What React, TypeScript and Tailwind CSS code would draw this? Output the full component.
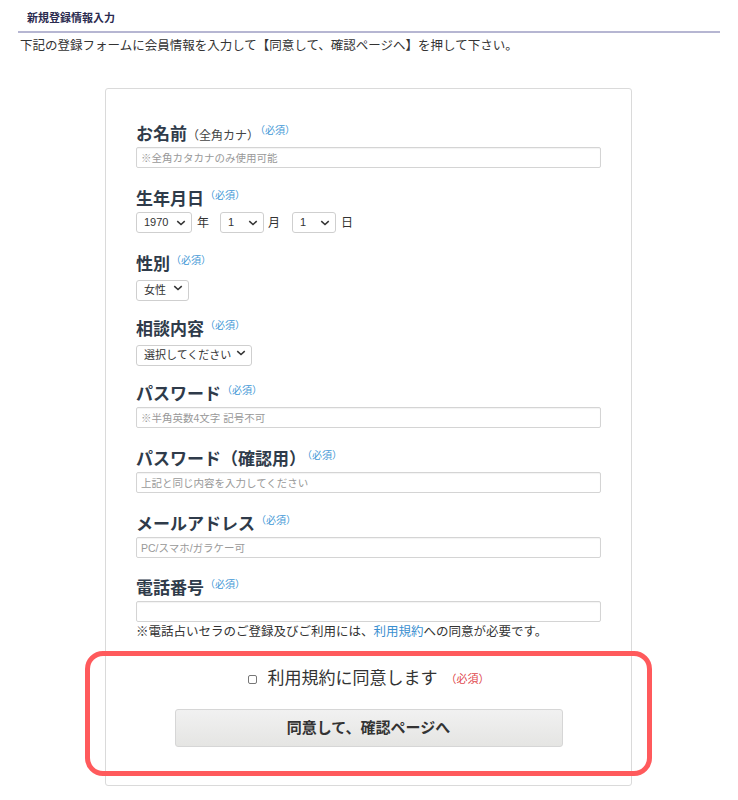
import React from "react";

const font = { fontFamily: '"Liberation Sans", "Noto Sans CJK JP", sans-serif' };

function Required({ red = false }: { red?: boolean }) {
  return (
    <span
      className={`ml-[1px] align-[6px] text-[10px] font-normal ${
        red ? "text-[#e0474c]" : "text-[#3f98d6]"
      }`}
    >
      （必須）
    </span>
  );
}

function Label({ children, sub }: { children: React.ReactNode; sub?: string }) {
  return (
    <div className="mb-[4px] h-[24px] whitespace-nowrap text-[17px] font-bold leading-[24px] text-[#2f3b4a]">
      {children}
      {sub && <span className="text-[12px] font-normal text-[#444]">{sub}</span>}
      <Required />
    </div>
  );
}

function TextInput({ placeholder }: { placeholder?: string }) {
  return (
    <input
      type="text"
      placeholder={placeholder}
      className="block h-[21px] w-full rounded-[2px] border border-[#d4d4d4] bg-white px-[4px] text-[10.5px] text-[#333] shadow-[inset_0_1px_1px_rgba(0,0,0,0.05)] outline-none placeholder:text-[#999]"
    />
  );
}

function Chevron() {
  return (
    <svg
      viewBox="0 0 12 8"
      className="pointer-events-none absolute right-[6px] top-1/2 h-[6px] w-[10px] -translate-y-1/2"
      fill="none"
      stroke="#333"
      strokeWidth="2"
    >
      <path d="M1 1.5 L6 6 L11 1.5" />
    </svg>
  );
}

function Select({ value, width }: { value: string; width: string }) {
  return (
    <div className={`relative h-[21px] ${width}`}>
      <select
        defaultValue={value}
        className="h-full w-full appearance-none rounded-[3px] border border-[#cfcfcf] bg-white pl-[7px] text-[11px] text-[#333] outline-none"
      >
        <option>{value}</option>
      </select>
      <Chevron />
    </div>
  );
}

export default function App() {
  return (
    <div className="relative h-[800px] w-[738px] overflow-hidden bg-white" style={font}>
      {/* Header */}
      <div className="px-[18px] pt-[11px]">
        <h1 className="border-b-2 border-[#b6b6d2] pb-[5px] pl-[9px] text-[11px] font-bold leading-[15px] text-[#2b2b4f]">
          新規登録情報入力
        </h1>
        <p className="mt-[4px] pl-[2px] text-[12.5px] leading-[18px] text-[#333]">
          下記の登録フォームに会員情報を入力して【同意して、確認ページへ】を押して下さい。
        </p>
      </div>

      {/* Form card */}
      <div className="ml-[105px] mt-[33px] w-[527px] rounded-[3px] border border-[#dadada] px-[30px] pb-[38px] pt-[30px]">
        <div className="mb-[16px]">
          <Label sub="（全角カナ）">お名前</Label>
          <TextInput placeholder="※全角カタカナのみ使用可能" />
        </div>

        <div className="mb-[16px]">
          <Label>生年月日</Label>
          <div className="flex items-center text-[12px] text-[#333]">
            <Select value="1970" width="w-[56px]" />
            <span className="ml-[5px] mr-[11px]">年</span>
            <Select value="1" width="w-[44px]" />
            <span className="ml-[4px] mr-[12px]">月</span>
            <Select value="1" width="w-[44px]" />
            <span className="ml-[5px]">日</span>
          </div>
        </div>

        <div className="mb-[16px]">
          <Label>性別</Label>
          <Select value="女性" width="w-[53px]" />
        </div>

        <div className="mb-[16px]">
          <Label>相談内容</Label>
          <Select value="選択してください" width="w-[116px]" />
        </div>

        <div className="mb-[16px]">
          <Label>パスワード</Label>
          <TextInput placeholder="※半角英数4文字 記号不可" />
        </div>

        <div className="mb-[16px]">
          <Label>パスワード（確認用）</Label>
          <TextInput placeholder="上記と同じ内容を入力してください" />
        </div>

        <div className="mb-[15px]">
          <Label>メールアドレス</Label>
          <TextInput placeholder="PC/スマホ/ガラケー可" />
        </div>

        <div>
          <Label>電話番号</Label>
          <TextInput />
          <p className="mt-[2px] text-[12.5px] leading-[16px] text-[#333]">
            ※電話占いセラのご登録及びご利用には、
            <span className="text-[#3a8fd0]">利用規約</span>
            への同意が必要です。
          </p>
        </div>

        <div className="mt-[27px] flex h-[24px] items-center justify-center">
          <span className="mr-[11px] h-[9px] w-[9px] rounded-[2px] border border-[#777] bg-white" />
          <span className="text-[17px] leading-[24px] text-[#333]">利用規約に同意します</span>
          <span className="ml-[8px] text-[11px] text-[#e0474c]">（必須）</span>
        </div>

        <div className="mt-[18px] flex justify-center">
          <button className="h-[38px] w-[388px] rounded-[3px] border border-[#d6d6d6] bg-gradient-to-b from-[#f1f1f1] to-[#e5e5e3] text-[15px] font-bold text-[#333]">
            同意して、確認ページへ
          </button>
        </div>
      </div>

      {/* Annotation frame */}
      <div className="pointer-events-none absolute left-[85px] top-[651px] h-[125px] w-[567px] rounded-[18px] border-[5px] border-[#ff5a5c]" />
    </div>
  );
}
